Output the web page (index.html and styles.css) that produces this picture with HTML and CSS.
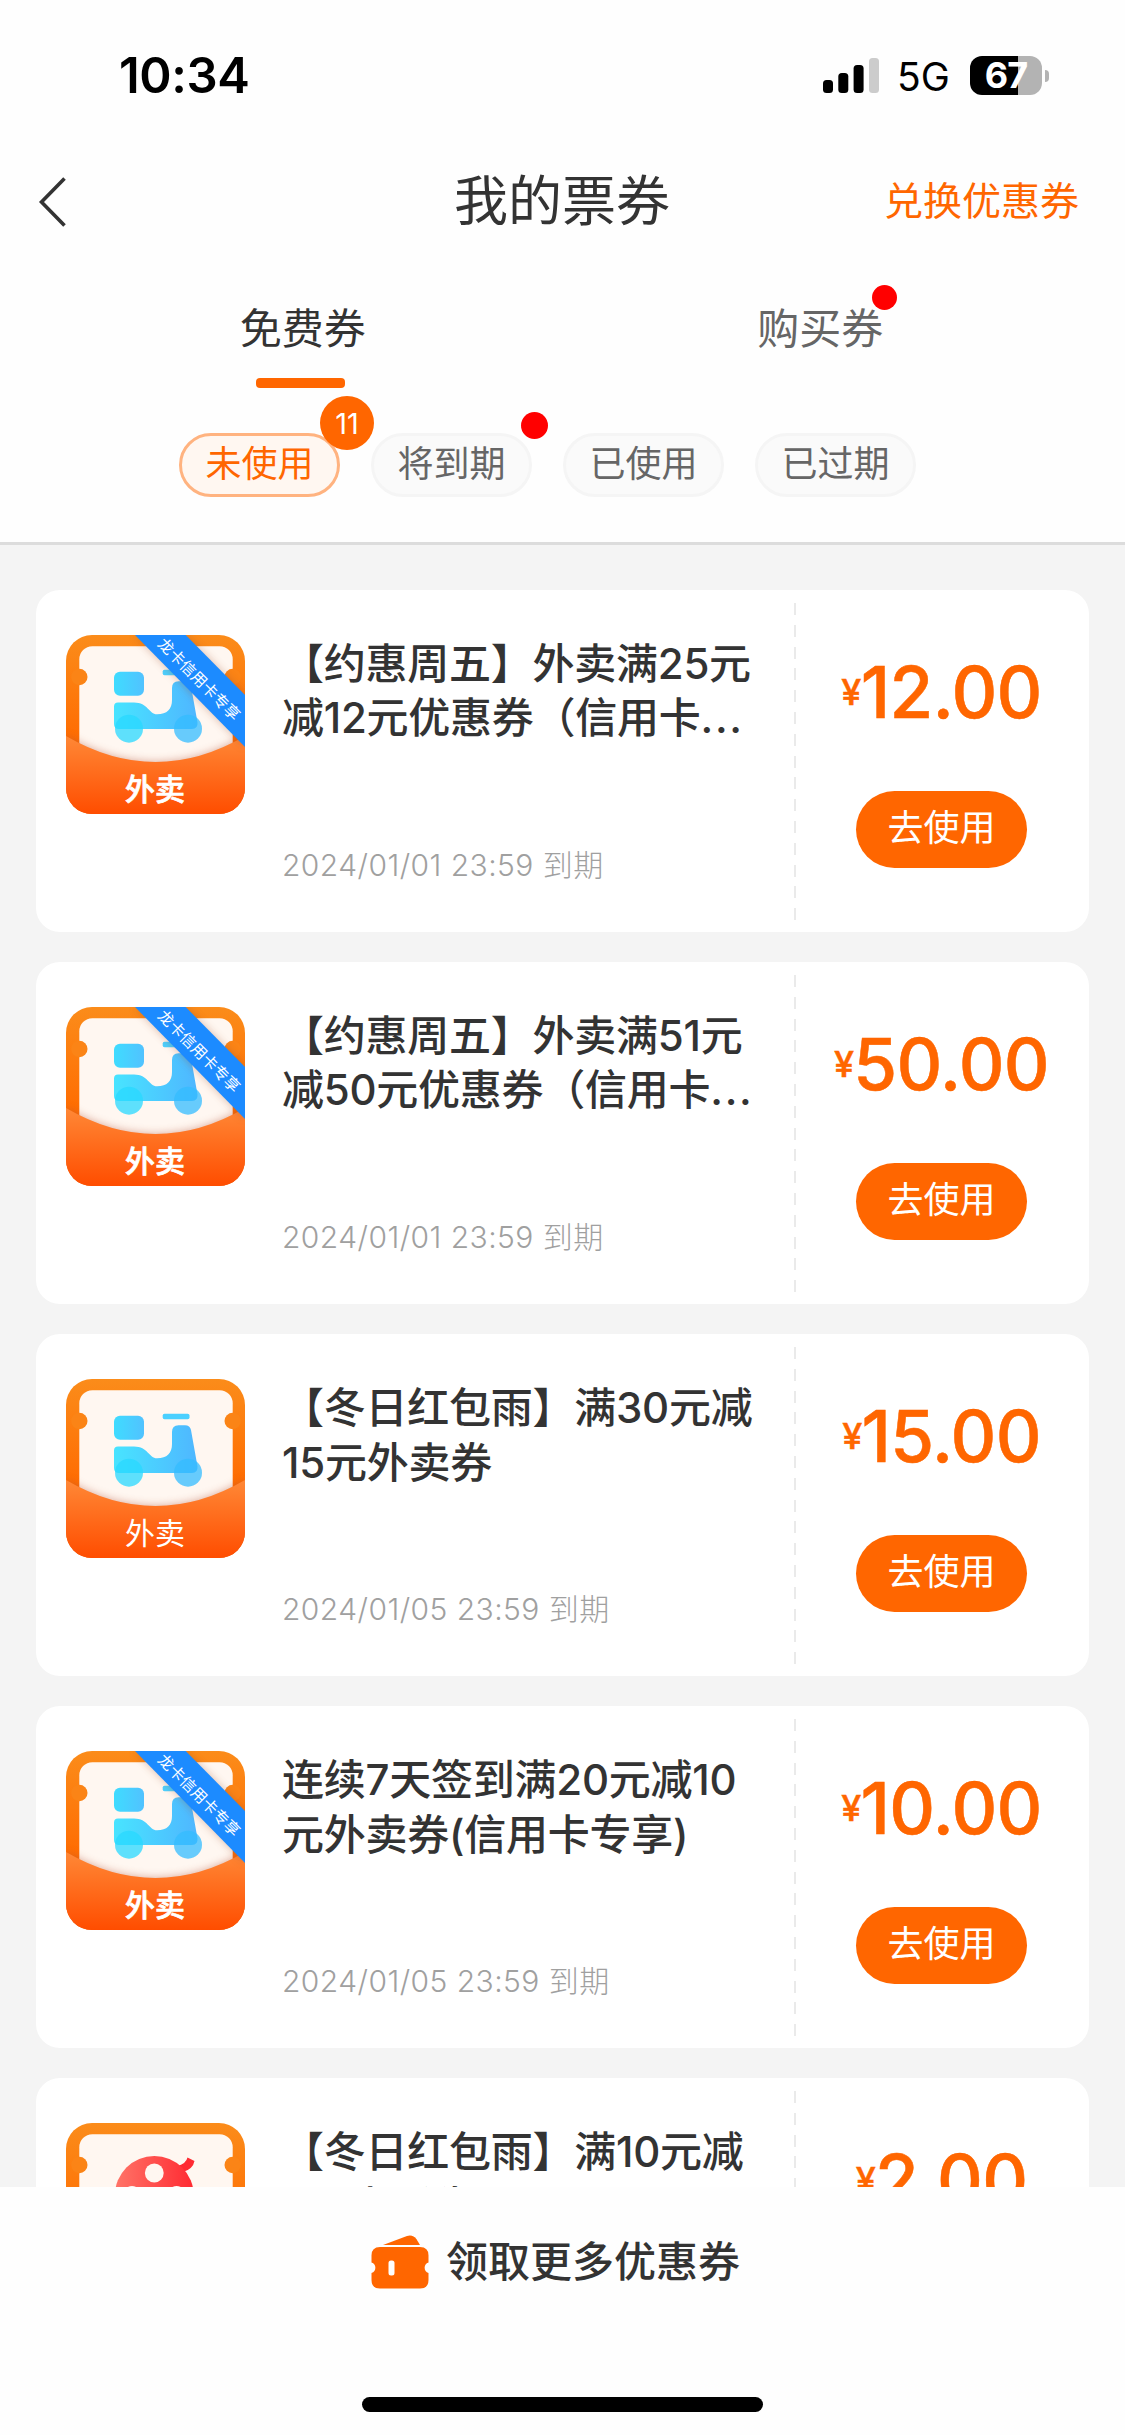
FILE: index.html
```
<!DOCTYPE html>
<html lang="zh-CN">
<head>
<meta charset="utf-8">
<title>我的票券</title>
<link rel="stylesheet" href="styles.css">
</head>
<body>
<svg class="defs" width="0" height="0" aria-hidden="true">
  <defs>
    <linearGradient id="back" x1="0" y1="0" x2="0" y2="1"><stop offset="0" stop-color="#fb8c1a"/><stop offset=".62" stop-color="#ff6a00"/></linearGradient>
    <linearGradient id="pocket" x1="0" y1="0" x2="0" y2="1"><stop offset="0" stop-color="#ff8836"/><stop offset="1" stop-color="#ff4d00"/></linearGradient>
    <linearGradient id="blue" gradientUnits="userSpaceOnUse" x1="48" y1="0" x2="132" y2="0"><stop offset="0" stop-color="#48e4ff"/><stop offset="1" stop-color="#4fb6ff"/></linearGradient>
    <linearGradient id="box" x1="0" y1="0" x2="1" y2="0"><stop offset="0" stop-color="#3fdcff"/><stop offset="1" stop-color="#51c2ff"/></linearGradient>
    <linearGradient id="red" x1="0" y1="0" x2="1" y2="0"><stop offset="0" stop-color="#ff7468"/><stop offset="1" stop-color="#ff2a32"/></linearGradient>
    <filter id="soft" x="-20%" y="-20%" width="140%" height="140%"><feGaussianBlur stdDeviation="4"/></filter>
    <clipPath id="tile"><rect width="179" height="179" rx="26"/></clipPath>
    <g id="ticket">
      <rect width="179" height="179" fill="url(#back)"/>
      <rect x="13.3" y="11.2" width="153.4" height="140" rx="13" fill="#fff7f1"/>
      <circle cx="13.3" cy="42" r="8.2" fill="#fb8416"/>
      <circle cx="166.7" cy="42" r="8.2" fill="#fb8416"/>
    </g>
    <g id="flap">
      <path d="M0 101Q89.5 153 179 101V179H0Z" fill="#b4553a" opacity=".5" filter="url(#soft)"/>
      <path d="M0 101Q89.5 153 179 101V179H0Z" fill="url(#pocket)"/>
    </g>
    <g id="scooter">
      <rect x="48" y="36.7" width="30" height="24" rx="6" fill="url(#box)"/>
      <rect x="96.7" y="34.7" width="26.8" height="5.6" rx="1.8" fill="#4bd0ff"/>
      <path d="M52 67.5H68C82 67.5 83 79.3 91 79.3C101 79.3 106 74 106 65V53Q106 46.3 112.500 46.3H119Q124 46.3 125 51L131.500 87.500Q132 94 126 94H53Q48 94 48 89V71.500Q48 67.500 52 67.500Z" fill="url(#blue)"/>
      <circle cx="63" cy="93.700" r="14" fill="#28d8ff" opacity=".75"/>
      <circle cx="122" cy="93.700" r="14" fill="#34bcff" opacity=".75"/>
    </g>
    <g id="ribbon">
      <path d="M69 0H119.700L179 60V112Z" fill="#9a4a28" opacity=".35" filter="url(#soft)"/>
      <path d="M69 0H119.700L179 60V112Z" fill="#1c8bff"/>
      <text class="ribbon-text" x="0" y="5.500" text-anchor="middle" transform="translate(133 44.300) rotate(45)">龙卡信用卡专享</text>
    </g>
  </defs>
</svg>
<div class="page">
  <header class="top">
    <div class="status">
      <span class="clock">10:34</span>
      <div class="status-right">
        <svg class="signal" width="56" height="35" viewBox="0 0 56 35"><rect y="22" width="10" height="13" rx="3.500"/><rect x="15.300" y="15" width="10" height="20" rx="3.500"/><rect x="30.600" y="7" width="10" height="28" rx="3.500"/><rect x="46" width="10" height="35" rx="3.500" fill="#ccc"/></svg>
        <span class="network">5G</span>
        <div class="battery"><span class="level">67</span><i class="cap"></i></div>
      </div>
    </div>
    <nav class="titlebar">
      <svg class="back" width="30" height="52" viewBox="0 0 30 52"><path d="M26.500 2.500L3.500 26L26.500 49.500" fill="none" stroke="#333" stroke-width="3.600"/></svg>
      <h1>我的票券</h1>
      <a class="redeem">兑换优惠券</a>
    </nav>
    <div class="tabs">
      <div class="tab active"><span>免费券</span></div>
      <div class="tab"><span>购买券<i class="dot"></i></span></div>
    </div>
    <div class="filters">
      <div class="pill active">未使用<b class="count">11</b></div>
      <div class="pill">将到期<i class="dot"></i></div>
      <div class="pill">已使用</div>
      <div class="pill">已过期</div>
    </div>
  </header>
  <main class="list">
    <article class="card">
      <svg class="icon" viewBox="0 0 179 179"><g clip-path="url(#tile)"><use href="#ticket"/><use href="#scooter"/><use href="#flap"/><use href="#ribbon"/></g><text class="label bold" x="89" y="165" text-anchor="middle">外卖</text></svg>
      <div class="info"><h2>【约惠周五】外卖满25元<br>减12元优惠券（信用卡<span class="more-text">...</span></h2><p>2024/01/01 23:59 到期</p></div>
      <div class="side"><div class="price"><small>¥</small>12.00</div><a class="use">去使用</a></div>
    </article>
    <article class="card">
      <svg class="icon" viewBox="0 0 179 179"><g clip-path="url(#tile)"><use href="#ticket"/><use href="#scooter"/><use href="#flap"/><use href="#ribbon"/></g><text class="label bold" x="89" y="165" text-anchor="middle">外卖</text></svg>
      <div class="info"><h2>【约惠周五】外卖满51元<br>减50元优惠券（信用卡<span class="more-text">...</span></h2><p>2024/01/01 23:59 到期</p></div>
      <div class="side"><div class="price"><small>¥</small>50.00</div><a class="use">去使用</a></div>
    </article>
    <article class="card">
      <svg class="icon" viewBox="0 0 179 179"><g clip-path="url(#tile)"><use href="#ticket"/><use href="#scooter"/><use href="#flap"/></g><text class="label" x="89" y="165" text-anchor="middle">外卖</text></svg>
      <div class="info"><h2>【冬日红包雨】满30元减<br>15元外卖券</h2><p>2024/01/05 23:59 到期</p></div>
      <div class="side"><div class="price"><small>¥</small>15.00</div><a class="use">去使用</a></div>
    </article>
    <article class="card">
      <svg class="icon" viewBox="0 0 179 179"><g clip-path="url(#tile)"><use href="#ticket"/><use href="#scooter"/><use href="#flap"/><use href="#ribbon"/></g><text class="label bold" x="89" y="165" text-anchor="middle">外卖</text></svg>
      <div class="info"><h2>连续7天签到满20元减10<br>元外卖券(信用卡专享)</h2><p>2024/01/05 23:59 到期</p></div>
      <div class="side"><div class="price"><small>¥</small>10.00</div><a class="use">去使用</a></div>
    </article>
    <article class="card">
      <svg class="icon" viewBox="0 0 179 179"><g clip-path="url(#tile)"><use href="#ticket"/><path d="M111 43Q120 41 121.500 34.500L128.500 38Q127 46 117 49Z" fill="#ff2a32"/><circle cx="88.300" cy="72.400" r="39.400" fill="url(#red)"/><circle cx="88.300" cy="50" r="9.400" fill="#fff7f1"/><circle cx="66" cy="72.500" r="9.400" fill="#fff7f1"/><circle cx="110.600" cy="72.500" r="9.400" fill="#fff7f1"/><use href="#flap"/></g></svg>
      <div class="info"><h2>【冬日红包雨】满10元减<br>2元电影券</h2></div>
      <div class="side"><div class="price"><small>¥</small>2.00</div></div>
    </article>
  </main>
  <footer class="bottom">
    <div class="more">
      <svg width="58" height="54" viewBox="0 0 58 54" fill="#ff6600"><path d="M12 10L36 .9Q42-.8 45.500 4.200L49 10Z"/><path d="M9 12H49Q57.500 12 57.500 20.500V27.500A5.500 5.500 0 0 0 57.500 38V45Q57.500 53.500 49 53.500H9Q.5 53.500.5 45V38A5.500 5.500 0 0 0 .5 27.500V20.500Q.5 12 9 12ZM20 25.500Q17.500 25.500 17.500 28V38Q17.500 40.500 20 40.500H21Q23.500 40.500 23.500 38V28Q23.500 25.500 21 25.500Z" fill-rule="evenodd"/></svg>
      <span>领取更多优惠券</span>
    </div>
    <div class="home"></div>
  </footer>
</div>
</body>
</html>
```
FILE: styles.css
```
* { box-sizing: border-box; margin: 0; padding: 0; }
body { background: #fff; color: #333; font-family: Inter, "Noto Sans CJK SC", sans-serif; }
.defs { display: block; position: absolute; }
.page { width: 1125px; height: 2435px; display: flex; flex-direction: column; overflow: hidden; }

.top { height: 545px; flex: none; background: #fefefe; border-bottom: 3px solid #dcdcdc; }
.status { height: 150px; padding: 0 83px 0 119px; display: flex; justify-content: space-between; align-items: center; color: #000; }
.clock { font-size: 49px; font-weight: 600; letter-spacing: -.4px; }
.status-right { display: flex; align-items: center; }
.signal { margin-top: 1px; }
.network { width: 51px; margin: 3px 22px 0 18px; font-size: 39px; line-height: 40px; }
.battery { position: relative; width: 72px; height: 39px; border-radius: 12px; background: linear-gradient(90deg, #000 48px, #b3b3b3 48px); display: flex; align-items: center; justify-content: center; color: #fff; }
.level { font-size: 36px; font-weight: 700; line-height: 39px; letter-spacing: -1px; }
.cap { position: absolute; left: 75px; top: 14px; width: 4px; height: 12px; border-radius: 0 4px 4px 0; background: #b3b3b3; }

.titlebar { height: 104px; padding: 0 46px 0 38px; display: grid; grid-template-columns: 1fr auto 1fr; align-items: center; }
.titlebar h1 { font-size: 54px; font-weight: 400; line-height: 80px; margin-left: 7px; }
.redeem { justify-self: end; padding-bottom: 9px; font-size: 39px; color: #ff6600; }

.tabs { height: 134px; padding: 44px 46px 0 44px; display: grid; grid-template-columns: 1fr 1fr; justify-items: center; font-size: 42px; color: #666; }
.tab { position: relative; line-height: 62px; }
.tab span { position: relative; display: block; }
.tab.active { color: #333; }
.tab.active::after { content: ""; display: block; width: 89px; height: 10px; margin: 18px auto 0; border-radius: 4px; background: #ff6600; transform: translateX(-2px); }
.dot { position: absolute; border-radius: 50%; background: #ff0000; }
.tab .dot { width: 25px; height: 25px; right: -14px; top: -13px; }
.filters { padding: 45px 0 0 179px; display: flex; gap: 31px; }
.pill { position: relative; width: 161px; height: 64px; border: 3px solid #f5f5f5; border-radius: 32px; background: #fafafa; color: #666; font-size: 36px; line-height: 56px; text-align: center; }
.pill.active { color: #ff6600; border-color: #ffb380; background: #fff7f1; }
.count { position: absolute; left: 138px; top: -40px; width: 54px; height: 54px; border-radius: 50%; background: #ff6600; color: #fff; font-size: 29px; font-weight: 400; line-height: 56px; }
.pill .dot { width: 27px; height: 27px; right: -19px; top: -24px; }

.list { flex: 1; min-height: 0; overflow: hidden; background: #f4f4f4; padding: 44.700px 36px 0; display: flex; flex-direction: column; gap: 30.200px; }
.card { flex: none; height: 342px; border-radius: 24px; background: #fff; display: flex; padding-left: 30px; }
.icon { width: 179px; height: 179px; margin-top: 45px; flex: none; }
.label { font: 400 30px "Noto Sans CJK SC", sans-serif; fill: #fff; }
.label.bold { font-weight: 500; stroke: #fff; stroke-width: .7px; }
.ribbon-text { font: 400 15.500px "Noto Sans CJK SC", sans-serif; fill: #fff; }
.info { width: 549px; flex: none; padding: 47px 0 44px 37px; display: flex; flex-direction: column; justify-content: space-between; }
.info h2 { font-size: 42px; font-weight: 500; line-height: 54.600px; letter-spacing: -.25px; white-space: nowrap; }
.more-text { letter-spacing: 1.600px; }
.info p { font-size: 30px; font-weight: 300; line-height: 46px; letter-spacing: .45px; color: #a0a0a0; }
.side { flex: 1; padding-top: 57px; display: flex; flex-direction: column; align-items: center; background: repeating-linear-gradient(180deg, #eaeaea 0 12px, transparent 12px 21.800px) 0 13px / 2px 317px no-repeat; }
.price { height: 90px; line-height: 90px; font-size: 71px; font-weight: 500; color: #ff6600; white-space: nowrap; letter-spacing: -.7px; -webkit-text-stroke: .5px #ff6600; }
.price small { font-size: 36px; font-weight: 500; position: relative; top: -13px; }
.use { width: 171px; height: 77px; margin-top: 54px; border-radius: 39px; background: #ff6600; color: #fff; font-size: 36px; line-height: 74px; text-align: center; }

.bottom { flex: none; height: 248px; background: #fefefe; display: flex; flex-direction: column; align-items: center; justify-content: space-between; padding: 43px 0 23px; }
.more { display: flex; align-items: center; gap: 17px; margin-right: 14px; font-size: 42px; font-weight: 500; line-height: 64px; }
.home { width: 401px; height: 15px; border-radius: 8px; background: #000; }
```
